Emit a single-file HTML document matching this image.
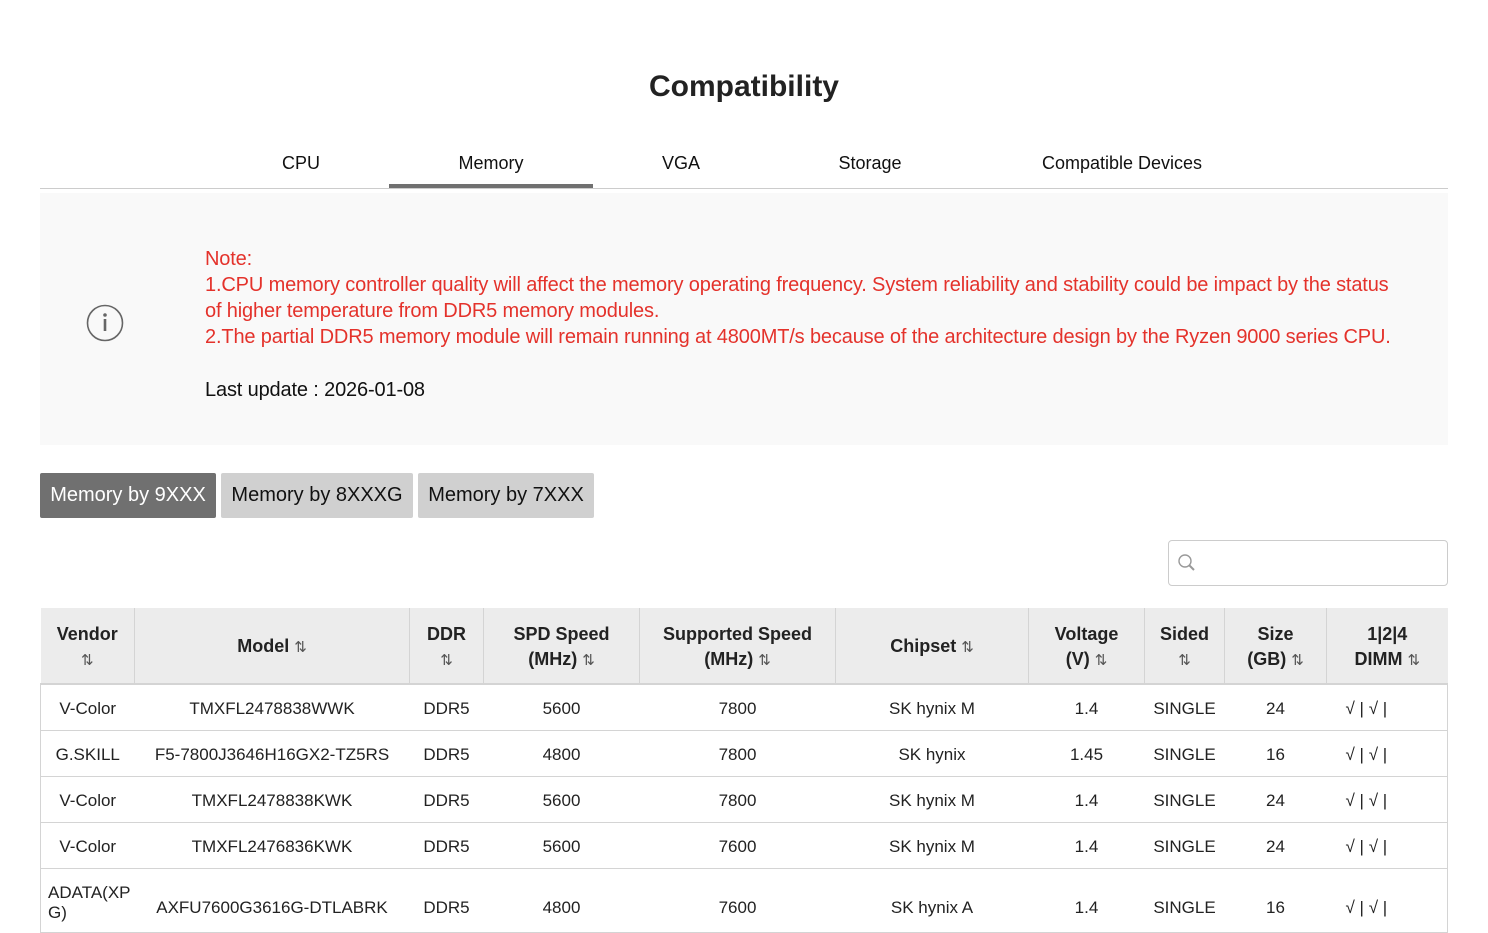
<!DOCTYPE html>
<html><head><meta charset="utf-8"><style>
*{margin:0;padding:0;box-sizing:border-box}
body{width:1488px;height:904px;overflow:hidden;background:#fff;font-family:"Liberation Sans",sans-serif;color:#222;position:relative}
.abs{position:absolute}
h1{position:absolute;top:70px;left:0;width:1488px;text-align:center;font-size:30px;font-weight:bold;color:#222}
.tab{position:absolute;top:153px;font-size:18px;color:#111;transform:translateX(-50%);white-space:nowrap}
.note{position:absolute;left:40px;top:193px;width:1408px;height:252px;background:#f9f9f9}
.nt{position:absolute;left:205px;font-size:20px;color:#e4322b;white-space:nowrap;letter-spacing:-0.15px}
.btn{position:absolute;top:473px;height:45px;font-size:20px;line-height:45px;text-align:center;border-radius:2px}
table{position:absolute;left:40px;top:608px;width:1408px;border-collapse:collapse;table-layout:fixed}
th{background:#ececec;height:76px;font-size:18px;font-weight:bold;line-height:25px;border-right:1px solid #d4d4d4;text-align:center;color:#222;padding-top:3px}
th:last-child{border-right:none}
th small{font-size:15px;font-weight:normal;color:#555}
td{height:46px;text-align:center;font-size:17px;border-bottom:1px solid #d4d4d4;color:#222;padding-top:4px}
tr td:first-child{border-left:1px solid #d4d4d4}
tr td:last-child{border-right:1px solid #d4d4d4;text-align:left;padding-left:19px}
thead tr{border-bottom:2px solid #d4d4d4}
</style></head><body>
<h1>Compatibility</h1>
<div class="tab" style="left:301px">CPU</div>
<div class="tab" style="left:491px">Memory</div>
<div class="tab" style="left:681px">VGA</div>
<div class="tab" style="left:870px">Storage</div>
<div class="tab" style="left:1122px">Compatible Devices</div>
<div class="abs" style="left:40px;top:188px;width:1408px;height:1px;background:#ccc"></div>
<div class="abs" style="left:389px;top:184px;width:204px;height:4px;background:#707070"></div>
<div class="note"></div>
<svg class="abs" style="left:86px;top:304px" width="38" height="38" viewBox="0 0 38 38"><circle cx="19" cy="19" r="17.5" fill="none" stroke="#666" stroke-width="1.6"/><circle cx="19" cy="11" r="1.8" fill="#666"/><rect x="17.7" y="15" width="2.6" height="12" fill="#666"/></svg>
<div class="nt" style="top:248px">Note:</div>
<div class="nt" style="top:274px">1.CPU memory controller quality will affect the memory operating frequency. System reliability and stability could be impact by the status</div>
<div class="nt" style="top:300px">of higher temperature from DDR5 memory modules.</div>
<div class="nt" style="top:326px">2.The partial DDR5 memory module will remain running at 4800MT/s because of the architecture design by the Ryzen 9000 series CPU.</div>
<div class="nt" style="top:379px;color:#111">Last update : 2026-01-08</div>
<div class="btn" style="left:40px;width:176px;background:#707070;color:#fff">Memory by 9XXX</div>
<div class="btn" style="left:221px;width:192px;background:#d0d0d0;color:#111">Memory by 8XXXG</div>
<div class="btn" style="left:418px;width:176px;background:#d0d0d0;color:#111">Memory by 7XXX</div>
<div class="abs" style="left:1168px;top:540px;width:280px;height:46px;border:1px solid #ccc;border-radius:4px"></div>
<svg class="abs" style="left:1177px;top:553px" width="20" height="20" viewBox="0 0 20 20"><circle cx="8" cy="8" r="6" fill="none" stroke="#999" stroke-width="1.4"/><line x1="12.5" y1="12.5" x2="17" y2="17" stroke="#999" stroke-width="2"/></svg>
<table>
<colgroup><col style="width:94px"><col style="width:275px"><col style="width:74px"><col style="width:156px"><col style="width:196px"><col style="width:193px"><col style="width:116px"><col style="width:80px"><col style="width:102px"><col style="width:121px"></colgroup>
<thead><tr>
<th>Vendor<br><small>⇅</small></th><th>Model <small>⇅</small></th><th>DDR<br><small>⇅</small></th><th>SPD Speed<br>(MHz) <small>⇅</small></th><th>Supported Speed<br>(MHz) <small>⇅</small></th><th>Chipset <small>⇅</small></th><th>Voltage<br>(V) <small>⇅</small></th><th>Sided<br><small>⇅</small></th><th>Size<br>(GB) <small>⇅</small></th><th style="text-align:center">1|2|4<br>DIMM <small>⇅</small></th>
</tr></thead>
<tbody>
<tr><td>V-Color</td><td>TMXFL2478838WWK</td><td>DDR5</td><td>5600</td><td>7800</td><td>SK hynix M</td><td>1.4</td><td>SINGLE</td><td>24</td><td>√ | √ |</td></tr>
<tr><td>G.SKILL</td><td>F5-7800J3646H16GX2-TZ5RS</td><td>DDR5</td><td>4800</td><td>7800</td><td>SK hynix</td><td>1.45</td><td>SINGLE</td><td>16</td><td>√ | √ |</td></tr>
<tr><td>V-Color</td><td>TMXFL2478838KWK</td><td>DDR5</td><td>5600</td><td>7800</td><td>SK hynix M</td><td>1.4</td><td>SINGLE</td><td>24</td><td>√ | √ |</td></tr>
<tr><td>V-Color</td><td>TMXFL2476836KWK</td><td>DDR5</td><td>5600</td><td>7600</td><td>SK hynix M</td><td>1.4</td><td>SINGLE</td><td>24</td><td>√ | √ |</td></tr>
<tr><td style="height:64px;vertical-align:top;padding-top:14px;text-align:left;padding-left:7px;white-space:nowrap;overflow:hidden">ADATA(XP<br>G)</td><td style="padding-top:16px">AXFU7600G3616G-DTLABRK</td><td style="padding-top:16px">DDR5</td><td style="padding-top:16px">4800</td><td style="padding-top:16px">7600</td><td style="padding-top:16px">SK hynix A</td><td style="padding-top:16px">1.4</td><td style="padding-top:16px">SINGLE</td><td style="padding-top:16px">16</td><td style="padding-top:16px">√ | √ |</td></tr>
</tbody></table>
</body></html>
